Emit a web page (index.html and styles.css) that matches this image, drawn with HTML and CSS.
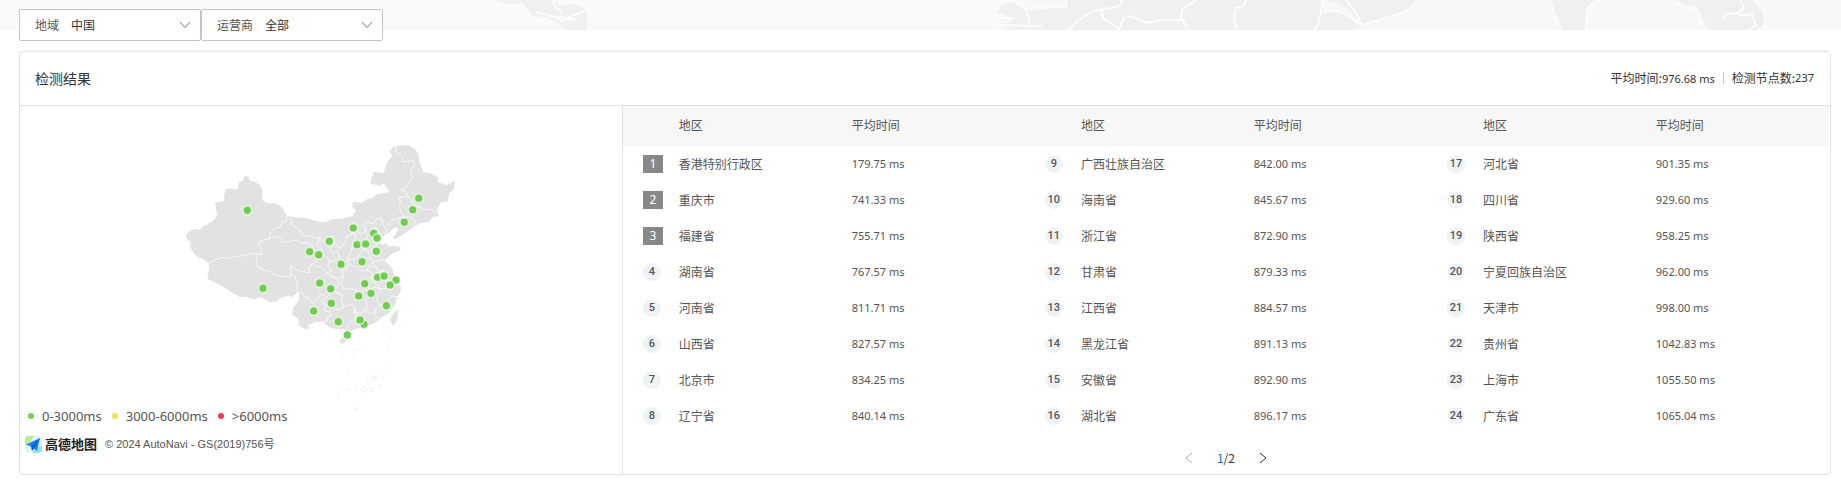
FILE: index.html
```html
<!DOCTYPE html>
<html lang="zh-CN">
<head>
<meta charset="utf-8">
<title>检测结果</title>
<link rel="stylesheet" href="styles.css">
</head>
<body>
<svg class="backdrop" viewBox="0 0 1841 30" preserveAspectRatio="xMidYMid slice" aria-hidden="true">
  <g class="backdrop-haze">
    <path d="M1000 30L1000 10L1012 0H1841V30Z"/>
  </g>
  <g class="backdrop-sea">
    <path d="M1352 0H1358L1364 16L1354 12L1346 6Z"/>
    <path d="M1378 26L1412 10L1546 10L1556 30H1378Z"/>
    <path d="M1588 30L1590 8L1604 0H1672L1694 14L1702 30Z"/>
    <path d="M1766 0H1830V30H1760L1768 16Z"/>
  </g>
  <g class="backdrop-land">
    <path d="M494 0L502 3L514 4L522 2L532 15L546 18L558 23L566 30H587V9L576 4L560 5L552 0Z"/>
    <path d="M996 12L1002 3L1012 1L1022 6L1030 11L1066 7L1068 0H1416L1404 12L1376 20L1362 26L1350 30H1010L1000 26L1014 19Z"/>
    <path class="cut" d="M1324 0L1342 4L1356 17L1360 25L1352 16L1340 10L1322 11Z"/>
    <path d="M1550 0H1594L1586 8L1587 30H1562L1556 14Z"/>
    <path d="M1676 0L1688 6L1696 4L1702 18L1708 30H1754L1766 24L1762 10L1752 0Z"/>
  </g>
  <g class="backdrop-lines">
    <path d="M536 12L548 15L562 20M556 16L576 20M560 22L570 17L587 10M552 0L556 8L562 12"/>
    <path d="M996 12L1002 3L1012 1L1022 6L1027 12L1030 26M1025 10L1032 7H1066V0M998 18H1014M998 25L1042 26"/>
    <path d="M1068 30L1078 20L1094 11L1106 9L1120 6L1122 0M1101 11L1104 19L1114 25L1120 30M1119 28L1125 16L1136 18L1148 23L1160 20L1184 20M1197 0L1182 9L1181 18L1188 28"/>
    <path d="M1246 0L1244 6L1236 8L1234 20L1237 30M1323 0L1321 12L1318 24L1314 30M1324 12L1340 11L1352 18L1360 25M1346 0L1357 14L1362 25L1404 12L1420 0"/>
    <path d="M1550 0L1556 18L1561 30M1600 0L1588 8L1586 30M1676 2L1688 8L1698 12L1702 30M1740 0L1744 8L1738 13L1726 14L1724 20M1738 16L1752 14L1756 26L1748 30M1756 0L1766 12L1764 30"/>
  </g>
</svg>

<main class="page">
  <form class="filters">
    <div class="filter">
      <label for="region">地域</label>
      <select id="region"><option>中国</option></select>
      <svg class="filter-arrow" viewBox="0 0 12 8" aria-hidden="true"><path d="M1 1L6 6.500L11 1"/></svg>
    </div>
    <div class="filter">
      <label for="carrier">运营商</label>
      <select id="carrier"><option>全部</option></select>
      <svg class="filter-arrow" viewBox="0 0 12 8" aria-hidden="true"><path d="M1 1L6 6.500L11 1"/></svg>
    </div>
  </form>

  <section class="card">
    <header class="card-header">
      <h1>检测结果</h1>
      <p class="summary"><span>平均时间:<b>976.68 ms</b></span><span>检测节点数:<b>237</b></span></p>
    </header>

    <div class="card-body">
      <div class="map-pane">
        <svg class="map" viewBox="0 0 846 828" role="img" aria-label="中国检测节点分布">
          <g class="land">
            <path d="M18 318L25 305L45 297L60 300L70 288L88 280L104 268L112 250L106 236L110 230L103 218L133 212L132 196L138 178L150 175L172 180L178 155L190 152L192 140L205 138L210 152L226 156L240 166L248 182L246 210L262 220L285 220L305 232L315 248L320 258L345 262L380 265L415 275L435 277L455 268L490 265L518 258L528 240L518 235L518 218L530 216L545 219L560 208L575 205L590 193L628 186L622 175L610 160L600 168L590 164L572 163L572 152L582 125L610 130L620 100L637 75L628 65L640 50L665 45L690 47L708 60L716 75L718 95L730 127L750 130L772 140L776 158L785 160L800 165L826 152L820 180L808 190L803 215L785 215L772 235L775 258L755 262L748 275L720 280L700 292L690 300L665 315L648 328L640 322L655 300L652 292L640 295L625 310L610 319L600 325L597 340L610 345L620 338L625 350L645 347L662 352L660 361L640 368L618 388L615 396L630 405L638 418L642 434L656 446L648 458L663 470L662 484L652 500L644 526L625 550L606 562L590 575L560 590L535 594L520 600L508 603L505 618L494 610L496 598L465 597L445 590L430 577L405 575L385 585L388 598L375 598L355 585L355 567L335 553L340 530L355 515L358 490L350 490L335 502L325 497L300 505L290 514L270 517L255 508L240 502L222 508L200 500L180 502L160 490L120 465L85 448L82 430L88 420L85 400L72 388L50 380L35 360L30 350L32 335L22 330Z"/>
            <path d="M655 540L648 542L636 556L630 570L640 588L650 572L655 555Z"/>
            <path d="M478 630L488 622L506 618L500 632L488 641L480 639Z"/>
          </g>
          <g class="borders">
            <path d="M85 400L105 390L126 382L150 386L160 380L195 377L215 370L235 372L248 375L240 350L235 338L252 330L268 326L272 308L282 296L300 292L308 276L320 275L318 258"/>
            <path d="M268 326L284 320L300 324L310 336L325 335L350 330L366 340L384 338L400 352L404 366L416 378L412 394L400 400"/>
            <path d="M235 372L228 395L235 412L252 420L270 425L290 436L310 440L330 440L334 425L332 408L350 420L368 425L390 428L386 412L400 400L408 410L424 410L440 428L430 436"/>
            <path d="M334 430L345 440L352 460L352 490L366 488L378 504L386 502L398 520L410 510L420 492L440 500"/>
            <path d="M330 262L336 285L360 300L368 318L395 318L406 328L420 322L412 346L428 358L424 370L440 380L450 396L442 408L456 424L440 428"/>
            <path d="M420 322L426 334L440 322L462 318L464 340L450 356L458 370L474 364L478 384L462 392L450 396"/>
            <path d="M464 345L484 355L498 330L500 320L524 310L528 318L518 345L510 372L500 388L508 402L500 418L480 424L492 434L474 446L456 440L440 428"/>
            <path d="M500 320L530 304L548 312L556 298L550 284L560 276L580 282L590 266L604 264L610 286L620 300L614 316"/>
            <path d="M556 300L562 320L552 336L548 360L540 372L526 386L502 390M574 300L584 290L596 304L604 318L594 328L580 320L568 308Z"/>
            <path d="M548 360L566 366L580 352L598 340M566 368L570 384L584 396L604 390L618 392M584 396L570 404L560 420L580 430L574 446L586 462L604 476L628 474"/>
            <path d="M572 410L586 408L596 424L612 420L606 436L622 448L630 462L652 458"/>
            <path d="M508 402L530 412L546 424L566 420M492 434L484 456L490 478L516 476L540 484L566 478L586 472L604 478L594 492L590 510L600 528L618 520L634 498L652 500"/>
            <path d="M620 286L634 272L650 266L660 262L672 262L664 246L656 232L662 214L654 204L670 200L684 198L676 184L662 182L684 164L698 140L692 122L706 98L696 92L670 96L664 76L646 64L650 50"/>
            <path d="M684 198L694 212L704 226L720 232L734 240L750 236L764 246L775 246M672 262L690 258L704 272L702 290"/>
            <path d="M474 446L478 464L460 480L470 488L490 496L484 512L492 530L480 538L460 540L446 546L430 540L438 524L424 516L440 500L456 490"/>
            <path d="M446 546L456 556L442 562L440 576L424 574M492 530L510 524L524 534L520 548L540 550L556 542L560 528L556 506L566 490L566 478"/>
            <path d="M524 534L532 560L520 572L506 580L502 596M560 538L566 550L584 548L588 560L600 564M600 528L586 540L584 550"/>
          </g>
          <g class="reef">
            <path d="M686 532L690 530M672 538L674 533M658 590L660 580M632 616L628 632M622 655L620 665M516 660L522 656M524 664L528 668M532 656L534 662M552 664L556 662M488 670L490 676M518 674L528 676M502 724L500 734M614 708L612 718M612 736L610 746M574 734L580 744L578 752M590 738L584 748M558 744L562 750M598 764L594 772M606 762L600 768M544 768L560 776L552 788L544 778M530 764L534 770M566 778L578 774M570 786L580 784M512 776L500 780M492 782L486 786M528 780L532 788M474 790L476 802M546 806L550 810M528 814L532 818M520 839L536 836M560 754L566 764"/>
          </g>
          <g class="nodes">
            <circle cx="202" cy="241" r="13"/><circle cx="249" cy="475" r="13"/>
            <circle cx="716" cy="205" r="13"/><circle cx="698" cy="239" r="13"/>
            <circle cx="673" cy="277" r="13"/><circle cx="520" cy="294" r="13"/>
            <circle cx="581" cy="310" r="13"/><circle cx="591" cy="324" r="13"/>
            <circle cx="448" cy="334" r="13"/><circle cx="531" cy="344" r="13"/>
            <circle cx="557" cy="342" r="13"/><circle cx="389" cy="365" r="13"/>
            <circle cx="416" cy="374" r="13"/><circle cx="589" cy="364" r="13"/>
            <circle cx="483" cy="403" r="13"/><circle cx="546" cy="395" r="13"/>
            <circle cx="593" cy="442" r="13"/><circle cx="612" cy="438" r="13"/>
            <circle cx="648" cy="450" r="13"/><circle cx="630" cy="465" r="13"/>
            <circle cx="419" cy="459" r="13"/><circle cx="452" cy="476" r="13"/>
            <circle cx="554" cy="461" r="13"/><circle cx="573" cy="490" r="13"/>
            <circle cx="536" cy="498" r="13"/><circle cx="454" cy="520" r="13"/>
            <circle cx="401" cy="543" r="13"/><circle cx="619" cy="527" r="13"/>
            <circle cx="475" cy="575" r="13"/><circle cx="552" cy="583" r="13"/>
            <circle cx="540" cy="570" r="13"/><circle cx="502" cy="615" r="13"/>
          </g>
        </svg>
        <ul class="legend">
          <li class="fast">0-3000ms</li>
          <li class="medium">3000-6000ms</li>
          <li class="slow">&gt;6000ms</li>
        </ul>
        <p class="credit">
          <svg class="brand-icon" viewBox="0 0 17 17" aria-hidden="true">
            <rect width="17" height="17" rx="4" fill="#e4f3ec"/>
            <path d="M0 9V4Q0 0 4 0H9L5 6Z" fill="#b4f08c"/>
            <path d="M7 17L12 11L17 10V13Q17 17 13 17Z" fill="#8fe3ff"/>
            <path d="M15 2L1 8.500L6 10.500L12 15Z" fill="#1583f5"/>
            <path d="M15 2L6 10.500L7 15L9 12.500Z" fill="#0a5fd0"/>
          </svg>
          <span class="brand">高德地图</span>
          <span class="copyright">© 2024 AutoNavi - GS(2019)756号</span>
        </p>
      </div>

      <div class="results">
        <div class="tables">
          <table>
            <thead><tr><th class="rank-col"></th><th class="name-col">地区</th><th>平均时间</th></tr></thead>
            <tbody>
              <tr><td><span class="rank top">1</span></td><td>香港特别行政区</td><td class="time">179.75 ms</td></tr>
              <tr><td><span class="rank top">2</span></td><td>重庆市</td><td class="time">741.33 ms</td></tr>
              <tr><td><span class="rank top">3</span></td><td>福建省</td><td class="time">755.71 ms</td></tr>
              <tr><td><span class="rank">4</span></td><td>湖南省</td><td class="time">767.57 ms</td></tr>
              <tr><td><span class="rank">5</span></td><td>河南省</td><td class="time">811.71 ms</td></tr>
              <tr><td><span class="rank">6</span></td><td>山西省</td><td class="time">827.57 ms</td></tr>
              <tr><td><span class="rank">7</span></td><td>北京市</td><td class="time">834.25 ms</td></tr>
              <tr><td><span class="rank">8</span></td><td>辽宁省</td><td class="time">840.14 ms</td></tr>
            </tbody>
          </table>
          <table>
            <thead><tr><th class="rank-col"></th><th class="name-col">地区</th><th>平均时间</th></tr></thead>
            <tbody>
              <tr><td><span class="rank">9</span></td><td>广西壮族自治区</td><td class="time">842.00 ms</td></tr>
              <tr><td><span class="rank">10</span></td><td>海南省</td><td class="time">845.67 ms</td></tr>
              <tr><td><span class="rank">11</span></td><td>浙江省</td><td class="time">872.90 ms</td></tr>
              <tr><td><span class="rank">12</span></td><td>甘肃省</td><td class="time">879.33 ms</td></tr>
              <tr><td><span class="rank">13</span></td><td>江西省</td><td class="time">884.57 ms</td></tr>
              <tr><td><span class="rank">14</span></td><td>黑龙江省</td><td class="time">891.13 ms</td></tr>
              <tr><td><span class="rank">15</span></td><td>安徽省</td><td class="time">892.90 ms</td></tr>
              <tr><td><span class="rank">16</span></td><td>湖北省</td><td class="time">896.17 ms</td></tr>
            </tbody>
          </table>
          <table>
            <thead><tr><th class="rank-col"></th><th class="name-col">地区</th><th>平均时间</th></tr></thead>
            <tbody>
              <tr><td><span class="rank">17</span></td><td>河北省</td><td class="time">901.35 ms</td></tr>
              <tr><td><span class="rank">18</span></td><td>四川省</td><td class="time">929.60 ms</td></tr>
              <tr><td><span class="rank">19</span></td><td>陕西省</td><td class="time">958.25 ms</td></tr>
              <tr><td><span class="rank">20</span></td><td>宁夏回族自治区</td><td class="time">962.00 ms</td></tr>
              <tr><td><span class="rank">21</span></td><td>天津市</td><td class="time">998.00 ms</td></tr>
              <tr><td><span class="rank">22</span></td><td>贵州省</td><td class="time">1042.83 ms</td></tr>
              <tr><td><span class="rank">23</span></td><td>上海市</td><td class="time">1055.50 ms</td></tr>
              <tr><td><span class="rank">24</span></td><td>广东省</td><td class="time">1065.04 ms</td></tr>
            </tbody>
          </table>
        </div>
        <nav class="pager" aria-label="分页">
          <button type="button" disabled aria-label="上一页"><svg viewBox="0 0 8 12"><path d="M7 1L1 6L7 11"/></svg></button>
          <span><span class="current">1</span>/2</span>
          <button type="button" aria-label="下一页"><svg viewBox="0 0 8 12"><path d="M1 1L7 6L1 11"/></svg></button>
        </nav>
      </div>
    </div>
  </section>
</main>
</body>
</html>
```
FILE: styles.css
```css
* {
  box-sizing: border-box;
}

body {
  margin: 0;
  background: #fff;
  color: #333;
  font: 12px/18px "Noto Sans CJK SC", sans-serif;
}

h1, p, ul {
  margin: 0;
  padding: 0;
  font-weight: 400;
}

/* Faint world map strip behind the filters */
.backdrop {
  position: absolute;
  top: 0;
  left: 0;
  width: 100%;
  height: 30px;
  background: linear-gradient(#fafafa, #fafafc);
}

.backdrop-haze { fill: #f8f8f8; }
.backdrop-sea { fill: #f8f8fb; }
.backdrop-land { fill: #f0f0f0; }
.backdrop-land .cut { fill: #f8f8fb; }
.backdrop-lines {
  fill: none;
  stroke: #fcfcfc;
  stroke-width: 2;
  stroke-linejoin: round;
}

.page {
  position: relative;
  padding: 9px 10px 8px 19px;
}

.filters {
  display: flex;
}

.filter {
  display: flex;
  align-items: center;
  gap: 12px;
  width: 182px;
  height: 32px;
  padding: 0 9px 0 15px;
  border: 1px solid #c0c6cc;
  border-radius: 2px;
  background: #fff;
}

.filter label {
  color: #555;
}

.filter select {
  flex: 1;
  min-width: 0;
  padding: 0;
  border: 0;
  appearance: none;
  background: none;
  color: #333;
  font: inherit;
}

.filter-arrow {
  width: 12px;
  height: 8px;
  fill: none;
  stroke: #777;
}

.card {
  margin-top: 10px;
  border: 1px solid #e2e2e2;
  border-radius: 4px;
  background: #fff;
}

.card-header {
  display: flex;
  align-items: center;
  justify-content: space-between;
  height: 54px;
  padding: 0 16px 1px 15px;
  border-bottom: 1px solid #e2e2e2;
}

.card-header h1 {
  font-size: 14px;
  line-height: 20px;
}

.summary {
  display: flex;
  align-items: center;
}

.summary b {
  font: 11px/18px "Noto Sans", sans-serif;
}

.summary span + span {
  display: flex;
  align-items: center;
}

.summary span + span::before {
  content: "";
  height: 12px;
  margin: 0 8px;
  border-left: 1px solid #c0c6cc;
}

.card-body {
  display: grid;
  grid-template-columns: 33.25% minmax(0, 1fr);
}

.map-pane {
  display: flex;
  flex-direction: column;
  padding: 24px 5px 16px;
}

.map {
  align-self: center;
  width: 282px;
  overflow: visible;
}

.land { fill: #e2e2e2; }

.borders {
  fill: none;
  stroke: #f8f8f8;
  stroke-width: 3;
  stroke-linejoin: round;
}

.reef {
  fill: none;
  stroke: #e6e6e6;
  stroke-width: 2;
}

.nodes {
  fill: #6fce4e;
  stroke: #fff;
  stroke-opacity: 0.6;
  stroke-width: 5;
}

.legend {
  display: flex;
  gap: 10px;
  padding-left: 3px;
  color: #555;
  font: 13px/20px "Noto Sans", sans-serif;
  list-style: none;
}

.legend li {
  display: flex;
  align-items: center;
  gap: 8px;
}

.legend li::before {
  content: "";
  width: 6px;
  height: 6px;
  border-radius: 50%;
  background: currentColor;
}

.legend .fast::before { background: #6fce4e; }
.legend .medium::before { background: #fbdf52; }
.legend .slow::before { background: #f5365c; }

.credit {
  display: flex;
  align-items: center;
  margin-top: 9px;
}

.brand-icon {
  width: 17px;
  height: 17px;
}

.brand {
  margin: 0 8px 0 3px;
  color: #222;
  font-size: 13px;
  font-weight: 700;
}

.copyright {
  color: #555;
  font: 11px/18px "Liberation Sans", "Noto Sans CJK SC", sans-serif;
}

.results {
  padding-right: 1px;
  border-left: 1px solid #e2e2e2;
}

.tables {
  display: grid;
  grid-template-columns: repeat(3, minmax(0, 1fr));
}

table {
  width: 100%;
  border-collapse: collapse;
  table-layout: fixed;
  color: #555;
}

th, td {
  height: 36px;
  padding: 0;
  font-weight: 400;
  text-align: left;
}

th {
  height: 40px;
  padding-bottom: 2px;
  background: #f7f7f7;
}

.time {
  font: 11px/18px "Noto Sans", sans-serif;
}

.rank-col {
  width: 56px;
}

.name-col {
  width: 43%;
}

.rank {
  display: block;
  width: 18px;
  height: 18px;
  margin-left: 20px;
  border-radius: 50%;
  background: #eff3f8;
  font: 500 11px/18px Roboto, sans-serif;
  text-align: center;
}

.rank.top {
  width: 20px;
  border-radius: 0;
  background: #888;
  color: #fff;
  font: 12px/18px "Noto Sans", sans-serif;
}

.pager {
  display: flex;
  align-items: center;
  justify-content: center;
  gap: 16px;
  padding: 14px 0 6px;
}

.pager button {
  display: flex;
  padding: 4px 8px;
  border: 0;
  background: none;
  color: #333;
}

.pager button:disabled {
  color: #aaa;
}

.pager svg {
  width: 8px;
  height: 12px;
  fill: none;
  stroke: currentColor;
}

.current {
  color: #0070cc;
}
```
